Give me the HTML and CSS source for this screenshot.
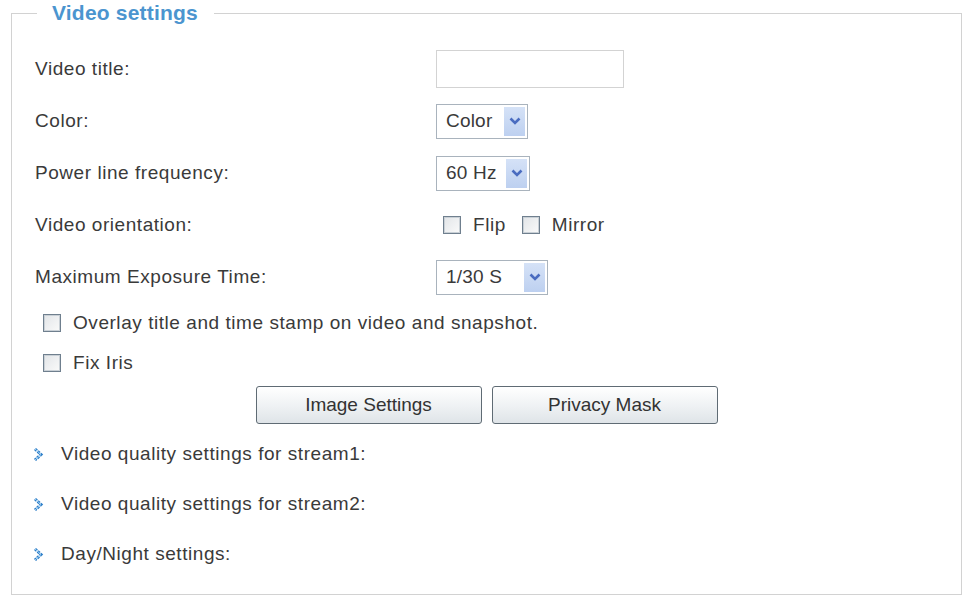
FILE: index.html
```html
<!DOCTYPE html>
<html lang="en">
<head>
  <meta charset="UTF-8">
  <title>Video settings</title>
  <link rel="stylesheet" href="styles.css">
</head>
<body>

<fieldset class="settings">
  <legend>Video settings</legend>

  <div class="row">
    <span class="label">Video title:</span>
    <input type="text" class="text-input">
  </div>

  <div class="row">
    <span class="label">Color:</span>
    <div class="select sel-color">
      <span class="value">Color</span>
      <span class="drop"><svg width="12" height="8" viewBox="0 0 12 8"><path d="M1.5 1.5 L6 6 L10.5 1.5" fill="none" stroke="#4a6cc0" stroke-width="2.6"/></svg></span>
    </div>
  </div>

  <div class="row">
    <span class="label">Power line frequency:</span>
    <div class="select sel-freq">
      <span class="value">60 Hz</span>
      <span class="drop"><svg width="12" height="8" viewBox="0 0 12 8"><path d="M1.5 1.5 L6 6 L10.5 1.5" fill="none" stroke="#4a6cc0" stroke-width="2.6"/></svg></span>
    </div>
  </div>

  <div class="row">
    <span class="label">Video orientation:</span>
    <div class="checks">
      <label class="check"><span class="box"></span>Flip</label>
      <label class="check"><span class="box"></span>Mirror</label>
    </div>
  </div>

  <div class="row">
    <span class="label">Maximum Exposure Time:</span>
    <div class="select sel-exp">
      <span class="value">1/30 S</span>
      <span class="drop"><svg width="12" height="8" viewBox="0 0 12 8"><path d="M1.5 1.5 L6 6 L10.5 1.5" fill="none" stroke="#4a6cc0" stroke-width="2.6"/></svg></span>
    </div>
  </div>

  <div class="option">
    <label class="check"><span class="box"></span>Overlay title and time stamp on video and snapshot.</label>
  </div>
  <div class="option">
    <label class="check"><span class="box"></span>Fix Iris</label>
  </div>

  <div class="buttons">
    <button class="btn">Image Settings</button>
    <button class="btn">Privacy Mask</button>
  </div>

  <ul class="links">
    <li><svg class="arrow" width="11" height="15" viewBox="0 0 11 15"><path d="M2 2 L8 7.5 L2 13" fill="none" stroke="#2f7fc8" stroke-width="3" stroke-dasharray="2.6 1"/><path d="M2 2 L8 7.5 L2 13" fill="none" stroke="#9fd0f4" stroke-width="1"/></svg>Video quality settings for stream1:</li>
    <li><svg class="arrow" width="11" height="15" viewBox="0 0 11 15"><path d="M2 2 L8 7.5 L2 13" fill="none" stroke="#2f7fc8" stroke-width="3" stroke-dasharray="2.6 1"/><path d="M2 2 L8 7.5 L2 13" fill="none" stroke="#9fd0f4" stroke-width="1"/></svg>Video quality settings for stream2:</li>
    <li><svg class="arrow" width="11" height="15" viewBox="0 0 11 15"><path d="M2 2 L8 7.5 L2 13" fill="none" stroke="#2f7fc8" stroke-width="3" stroke-dasharray="2.6 1"/><path d="M2 2 L8 7.5 L2 13" fill="none" stroke="#9fd0f4" stroke-width="1"/></svg>Day/Night settings:</li>
  </ul>
</fieldset>

</body>
</html>
```

FILE: styles.css
```css
body {
  margin: 0;
  padding: 0;
  background-color: #fff;
  font-family: "Liberation Sans", Arial, sans-serif;
  font-size: 19px;
  letter-spacing: 0.55px;
  color: #3a3a3a;
}

.settings {
  margin: 0 3px 0 11px;
  padding: 17px 23px 15px 23px;
  border: 1px solid #d2d2d2;
  min-width: 0;
}

legend {
  margin-left: 2px;
  padding: 0 16px 0 15px;
  font-size: 21px;
  line-height: 26px;
  font-weight: bold;
  letter-spacing: 0.2px;
  color: #4b95cf;
}

.row {
  display: flex;
  align-items: center;
  height: 52px;
}

.label {
  width: 401px;
  flex-shrink: 0;
}

.text-input {
  width: 188px;
  height: 38px;
  box-sizing: border-box;
  border: 1px solid #d3d3d3;
  margin: 0;
}

.select {
  display: flex;
  align-items: center;
  height: 35px;
  box-sizing: border-box;
  border: 1px solid #a9b3bd;
  padding: 2px 2px 2px 9px;
  background: #fff;
}

.select .value {
  flex: 1;
  letter-spacing: 0.2px;
}

.select .drop {
  width: 21px;
  height: 29px;
  background: linear-gradient(#d5e2f7, #bdd0f0);
  display: flex;
  align-items: center;
  justify-content: center;
}

.sel-color { width: 92px; }
.sel-freq { width: 94px; }
.sel-exp { width: 112px; }

.checks {
  display: flex;
  gap: 16px;
  padding-left: 7px;
}

.check {
  display: flex;
  align-items: center;
}

.box {
  width: 16px;
  height: 16px;
  border: 1px solid #6f7f8e;
  box-shadow: inset 0 0 0 1px #c9d0d6;
  background: linear-gradient(135deg, #e2e5e8, #fafafa);
  margin-right: 12px;
  flex-shrink: 0;
}

.option {
  height: 40px;
  display: flex;
  align-items: center;
  padding-left: 8px;
}

.buttons {
  display: flex;
  justify-content: center;
  gap: 10px;
  margin-top: 3px;
}

.btn {
  width: 226px;
  height: 38px;
  font-family: "Liberation Sans", Arial, sans-serif;
  font-size: 19px;
  color: #333;
  border: 1px solid #5f6b74;
  border-radius: 3px;
  background: linear-gradient(#ffffff, #eef1f3 55%, #dfe4e8);
}

.links {
  list-style: none;
  margin: 5px 0 0 0;
  padding: 0;
}

.links li {
  height: 50px;
  display: flex;
  align-items: center;
}

.arrow {
  margin: 0 17px 0 -2px;
  flex-shrink: 0;
}
```
